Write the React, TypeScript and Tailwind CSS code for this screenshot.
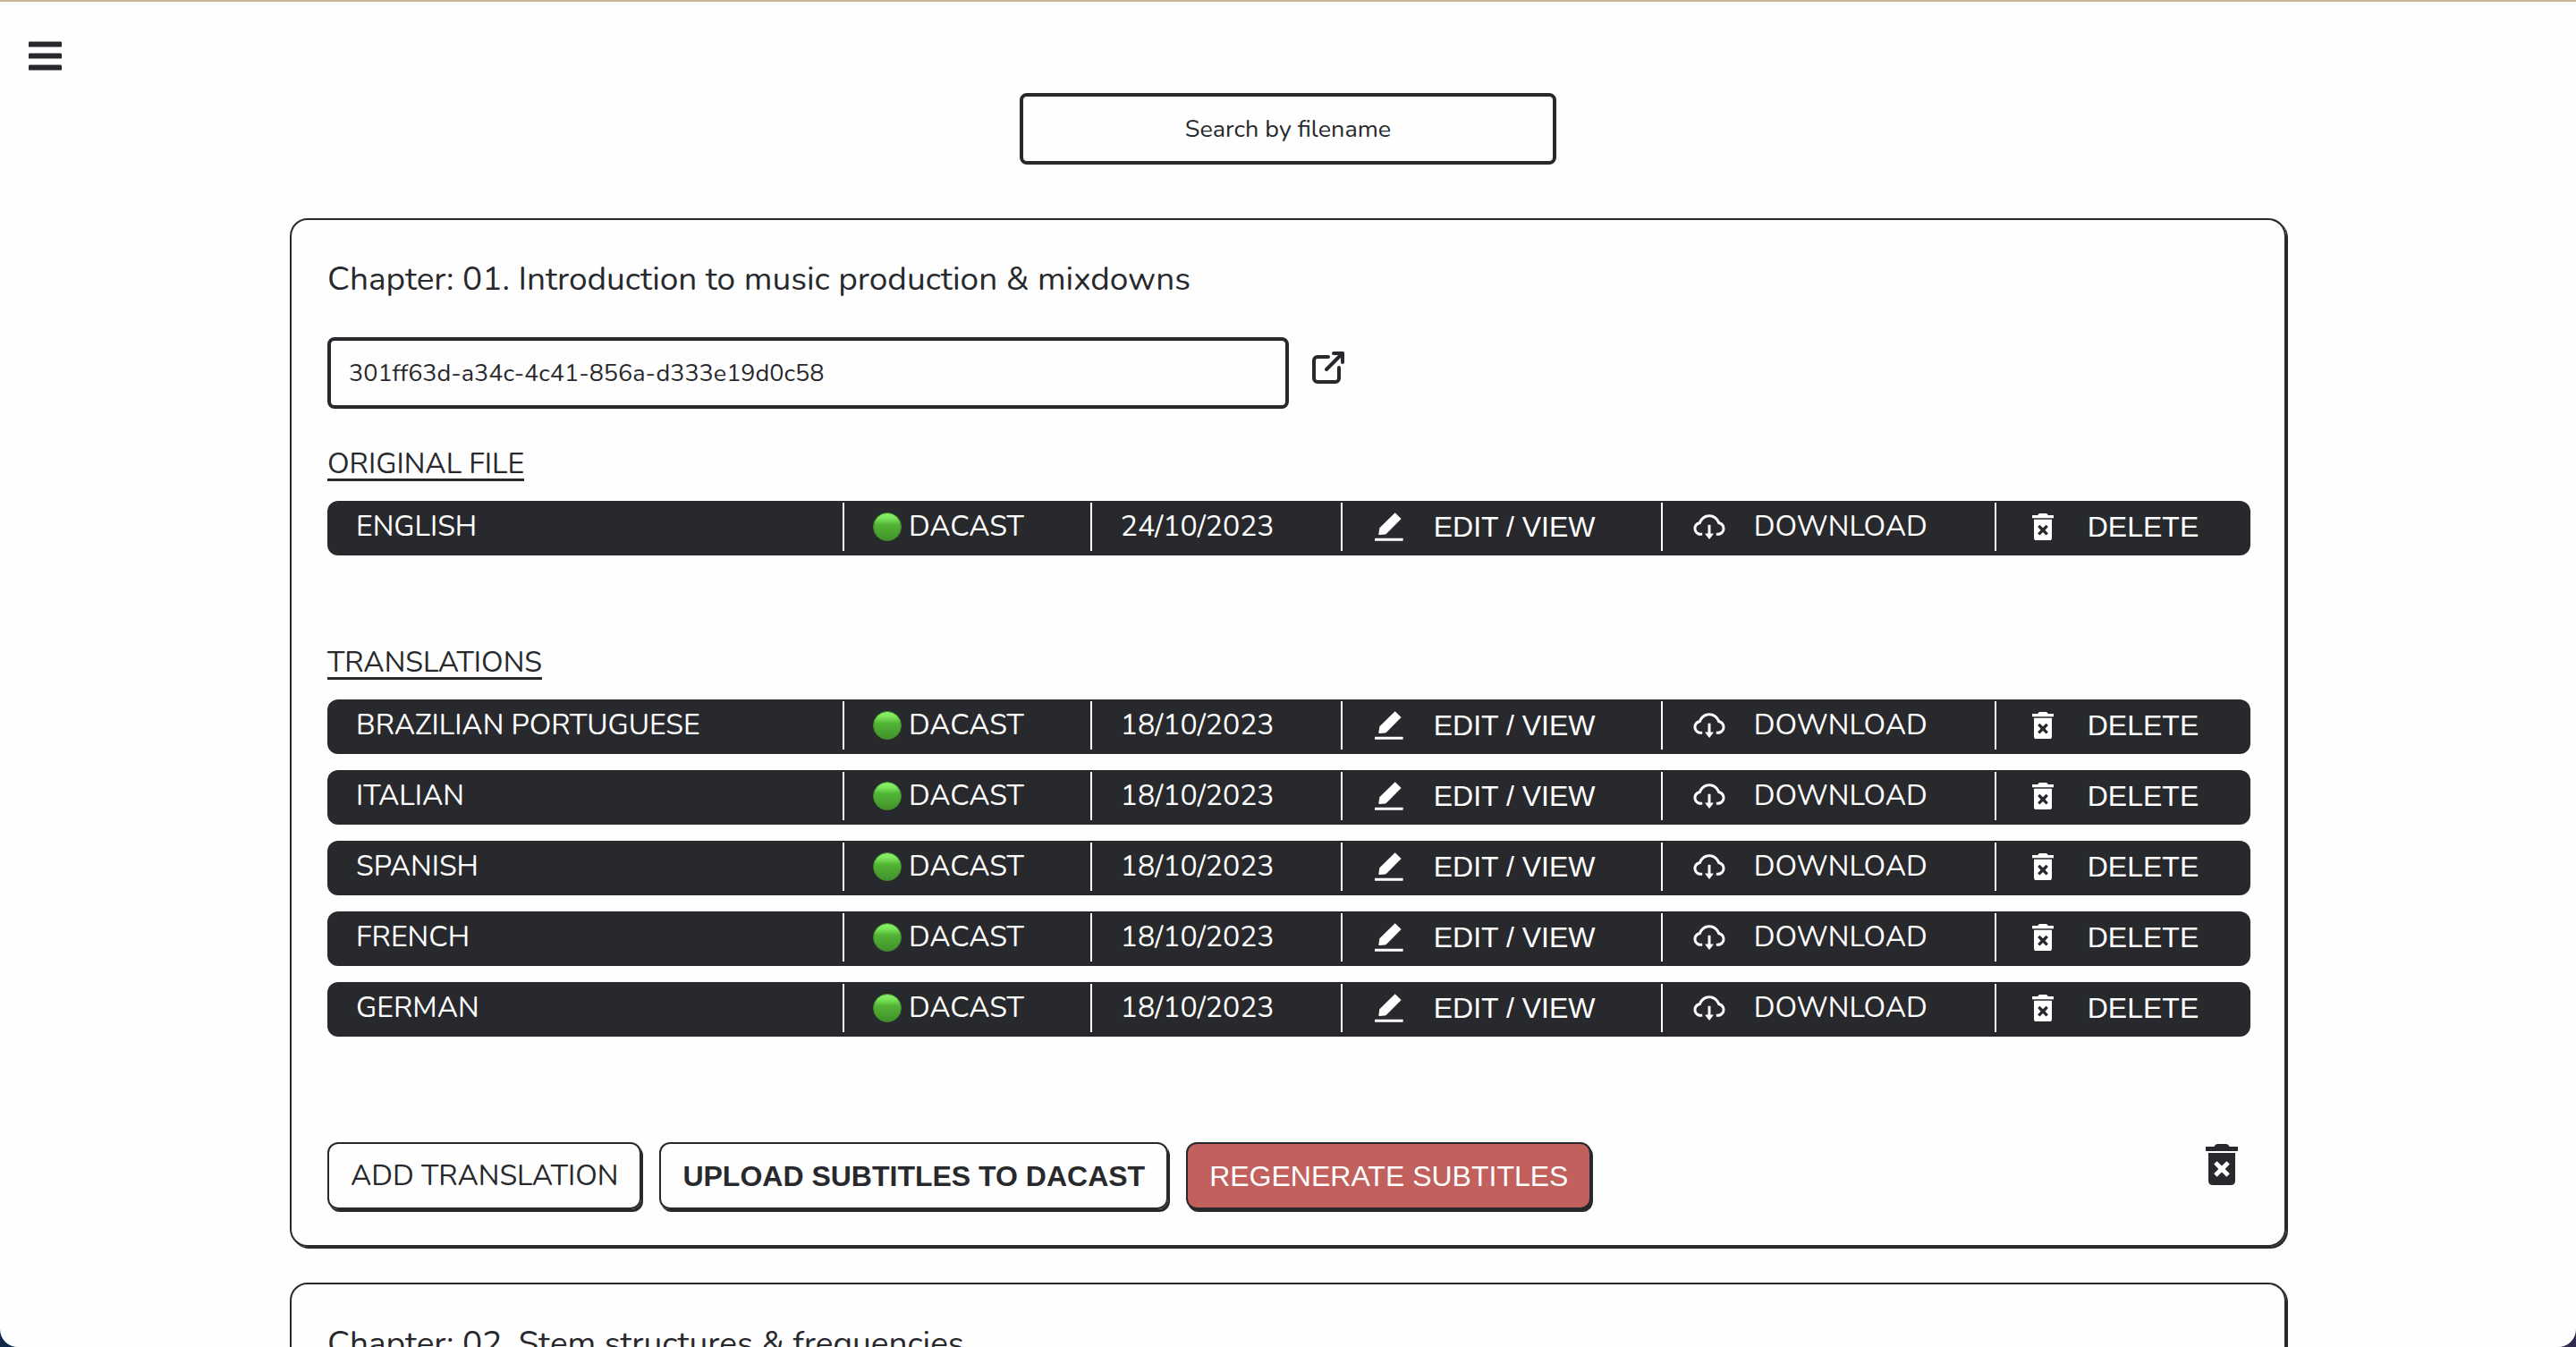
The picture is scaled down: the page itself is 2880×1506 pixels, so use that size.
import type { ReactNode } from "react";
import { AiOutlineCloudDownload } from "react-icons/ai";
import { TbExternalLink } from "react-icons/tb";

type Subtitle = { language: string; date: string };

type Files = {
  id: string;
  original: Subtitle;
  translations: Subtitle[];
};

type Chapter = { title: string; files?: Files };

const chapters: Chapter[] = [
  {
    title: "Chapter: 01. Introduction to music production & mixdowns",
    files: {
      id: "301ff63d-a34c-4c41-856a-d333e19d0c58",
      original: { language: "ENGLISH", date: "24/10/2023" },
      translations: [
        { language: "BRAZILIAN PORTUGUESE", date: "18/10/2023" },
        { language: "ITALIAN", date: "18/10/2023" },
        { language: "SPANISH", date: "18/10/2023" },
        { language: "FRENCH", date: "18/10/2023" },
        { language: "GERMAN", date: "18/10/2023" },
      ],
    },
  },
  { title: "Chapter: 02. Stem structures & frequencies" },
];

function MenuIcon() {
  return (
    <svg viewBox="0 0 37 33" className="w-[37px]" fill="currentColor" aria-hidden="true">
      <rect x="0" y="0.4" width="37" height="6.2" rx="1.2" />
      <rect x="0" y="13.4" width="37" height="6.2" rx="1.2" />
      <rect x="0" y="26.4" width="37" height="6.2" rx="1.2" />
    </svg>
  );
}

function PencilIcon() {
  return (
    <svg viewBox="0 0 32 32" className="w-8" fill="currentColor" aria-hidden="true">
      <path d="M22.7 0.2 29.6 7.1 13.3 23.6 11.6 24.5 4.9 25.1 4.3 24.5 5.3 17.6 6.1 16.5Z" />
      <rect x="0" y="28.7" width="31.6" height="3.1" rx="0.5" />
    </svg>
  );
}

function TrashIcon({ className }: { className: string }) {
  return (
    <svg viewBox="0 0 36 46" className={className} fill="currentColor" aria-hidden="true">
      <path d="M0 3H9.3Q10.8 0 13 0H23Q25.2 0 26.7 3H36V8H0Z" />
      <path
        fillRule="evenodd"
        d="M3 10H33V41Q33 46 28 46H8Q3 46 3 41ZM9.2 22.6 14.3 28 9.2 33.3 12.6 36.7 18 31.6 23.4 36.7 26.8 33.3 21.7 28 26.8 22.6 23.4 19.2 18 24.4 12.6 19.2Z"
      />
    </svg>
  );
}

function StatusDot() {
  return (
    <svg viewBox="0 0 32 32" className="w-8" aria-hidden="true">
      <defs>
        <linearGradient id="status" x1="0" y1="0" x2="0" y2="1">
          <stop offset="0" stopColor="#8df56d" />
          <stop offset="0.2" stopColor="#7be45b" />
          <stop offset="0.42" stopColor="#52b435" />
          <stop offset="1" stopColor="#42902a" />
        </linearGradient>
      </defs>
      <circle cx="16" cy="16" r="15.5" fill="url(#status)" stroke="#3f8a2b" strokeWidth="1" />
    </svg>
  );
}

function RowAction({ icon, label, font }: { icon: ReactNode; label: string; font?: string }) {
  return (
    <button type="button" className={`flex items-center gap-[30px] leading-10 ${font ?? ""}`}>
      <span className="flex w-10 justify-center">{icon}</span>
      {label}
    </button>
  );
}

function Cell({ children, last }: { children: ReactNode; last?: boolean }) {
  return (
    <td className="h-[61px] bg-[#28292d] p-0 pb-[3px] align-middle first:rounded-l-[12px] last:rounded-r-[12px]">
      <div
        className={`flex h-[54px] items-center gap-2 whitespace-nowrap pl-8 ${last ? "" : "border-r-2 border-white"}`}
      >
        {children}
      </div>
    </td>
  );
}

function SubtitleTable({ label, rows }: { label: string; rows: Subtitle[] }) {
  return (
    <table
      aria-label={label}
      className="mt-1 w-full table-fixed border-separate border-spacing-x-0 border-spacing-y-[18px] text-[32px] leading-10 text-white"
    >
      <colgroup>
        <col className="w-[26.88%]" />
        <col className="w-[12.88%]" />
        <col className="w-[13.02%]" />
        <col className="w-[16.65%]" />
        <col className="w-[17.35%]" />
        <col className="w-[13.22%]" />
      </colgroup>
      <tbody>
        {rows.map((row) => (
          <tr key={row.language}>
            <Cell>{row.language}</Cell>
            <Cell>
              <StatusDot />
              DACAST
            </Cell>
            <Cell>{row.date}</Cell>
            <Cell>
              <RowAction icon={<PencilIcon />} label="EDIT / VIEW" font="font-['Liberation_Sans',sans-serif]" />
            </Cell>
            <Cell>
              <RowAction icon={<AiOutlineCloudDownload size={40} />} label="DOWNLOAD" />
            </Cell>
            <Cell last>
              <RowAction
                icon={<TrashIcon className="w-6" />}
                label="DELETE"
                font="font-['Liberation_Sans',sans-serif]"
              />
            </Cell>
          </tr>
        ))}
      </tbody>
    </table>
  );
}

function SectionHeading({ children }: { children: ReactNode }) {
  return <h3 className="w-fit border-b-3 border-[#28292d] text-[32px] leading-8">{children}</h3>;
}

const actionButton =
  "h-[75px] rounded-[12px] border-2 border-[#28292d] px-6 text-[32px] leading-10 whitespace-nowrap shadow-[2px_3px_0_#28292d]";

function ChapterFiles({ files }: { files: Files }) {
  return (
    <>
      <div className="mt-[39px] flex gap-5">
        <input
          type="text"
          aria-label="File id"
          defaultValue={files.id}
          className="h-20 w-1/2 rounded-[8px] border-4 border-[#28292d] bg-transparent px-5 text-[27px]"
        />
        <a href="#open" aria-label="Open file" className="mt-[10px] h-12">
          <TbExternalLink size={48} />
        </a>
      </div>

      <div className="mt-[46px]">
        <SectionHeading>ORIGINAL FILE</SectionHeading>
        <SubtitleTable label="Original file" rows={[files.original]} />
      </div>
      <div className="mt-[86px]">
        <SectionHeading>TRANSLATIONS</SectionHeading>
        <SubtitleTable label="Translations" rows={files.translations} />
      </div>

      <div className="mt-[100px] flex items-start gap-5">
        <button type="button" className={actionButton}>
          ADD TRANSLATION
        </button>
        <button type="button" className={`${actionButton} font-['Liberation_Sans',sans-serif] font-bold`}>
          UPLOAD SUBTITLES TO DACAST
        </button>
        <button type="button" className={`${actionButton} bg-[#c1605c] font-['Liberation_Sans',sans-serif] text-white`}>
          REGENERATE SUBTITLES
        </button>
        <button type="button" aria-label="Delete chapter" className="mt-[2px] mr-[14px] ml-auto">
          <TrashIcon className="w-9" />
        </button>
      </div>
    </>
  );
}

function ChapterCard({ chapter }: { chapter: Chapter }) {
  return (
    <section className="rounded-[20px] border-2 border-[#28292d] pt-10 pr-[38px] pb-10 pl-10 shadow-[2px_2px_0_#28292d]">
      <h2 className="text-[37px] leading-[52px]">{chapter.title}</h2>
      {chapter.files && <ChapterFiles files={chapter.files} />}
    </section>
  );
}

export default function App() {
  return (
    <div className="h-screen overflow-hidden bg-linear-to-r from-[#10294a] to-[#2e2b4c]">
      <div className="h-full overflow-hidden rounded-b-[20px] border-t-2 border-[#c9b698] bg-[#fefefe] font-[Nunito,Lato,sans-serif] text-[#28292d]">
        <header className="flex flex-col pt-9">
          <button type="button" aria-label="Open menu" className="ml-[26px] flex size-12 items-center justify-center">
            <MenuIcon />
          </button>
          <input
            type="text"
            aria-label="Search by filename"
            placeholder="Search by filename"
            className="mt-[18px] h-20 w-[600px] self-center rounded-[8px] border-4 border-[#28292d] bg-transparent text-center text-[27px] placeholder:text-[#28292d]"
          />
        </header>
        <main className="mx-auto mt-[60px] flex w-[77.5%] flex-col gap-10">
          {chapters.map((chapter) => (
            <ChapterCard key={chapter.title} chapter={chapter} />
          ))}
        </main>
      </div>
    </div>
  );
}
